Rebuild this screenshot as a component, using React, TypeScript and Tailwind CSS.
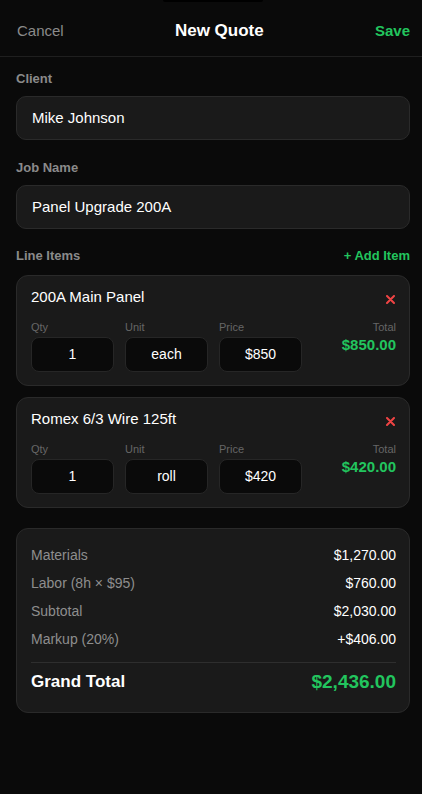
const font = { fontFamily: '"Liberation Sans", Arial, sans-serif' };

type Item = { name: string; qty: string; unit: string; price: string; total: string };

const items: Item[] = [
  { name: "200A Main Panel", qty: "1", unit: "each", price: "$850", total: "$850.00" },
  { name: "Romex 6/3 Wire 125ft", qty: "1", unit: "roll", price: "$420", total: "$420.00" },
];

const summary = [
  { label: "Materials", value: "$1,270.00" },
  { label: "Labor (8h × $95)", value: "$760.00" },
  { label: "Subtotal", value: "$2,030.00" },
  { label: "Markup (20%)", value: "+$406.00" },
];

const Field = ({ label, value }: { label: string; value: string }) => (
  <div className="mb-[20px]">
    <div className="text-[13px] leading-[16px] font-bold text-[#8a8a8a] mb-[9px]">{label}</div>
    <div className="h-[44px] rounded-[10px] bg-[#1a1a1a] border border-[#2a2a2a] flex items-center px-[15px] text-[15px] text-white">
      {value}
    </div>
  </div>
);

const Cell = ({ label, value }: { label: string; value: string }) => (
  <div className="w-[83px]">
    <div className="text-[11px] leading-[14px] text-[#666] mb-[3px]">{label}</div>
    <div className="h-[35px] rounded-[8px] bg-[#0a0a0a] border border-[#262626] flex items-center justify-center text-[14px] text-white">
      {value}
    </div>
  </div>
);

const LineItem = ({ item }: { item: Item }) => (
  <div className="rounded-[12px] bg-[#1a1a1a] border border-[#2a2a2a] pl-[14px] pr-[13px] pt-[12px] pb-[13px] mb-[11px]">
    <div className="flex items-center justify-between h-[18px] mb-[14px]">
      <span className="text-[15px] text-white">{item.name}</span>
      <svg width="9" height="9" viewBox="0 0 9 9" className="mt-[4px] mr-[1px]">
        <path d="M1 1L8 8M8 1L1 8" stroke="#ef4444" strokeWidth="2" strokeLinecap="round" />
      </svg>
    </div>
    <div className="flex gap-[11px]">
      <Cell label="Qty" value={item.qty} />
      <Cell label="Unit" value={item.unit} />
      <Cell label="Price" value={item.price} />
      <div className="flex-1 text-right">
        <div className="text-[11px] leading-[14px] text-[#666] mb-[1px]">Total</div>
        <div className="text-[15px] leading-[20px] font-bold text-[#22c55e]">{item.total}</div>
      </div>
    </div>
  </div>
);

export default function App() {
  return (
    <div className="w-[422px] h-[794px] bg-[#0a0a0a] relative overflow-hidden" style={font}>
      <div className="absolute top-0 left-[163px] w-[100px] h-[2px] bg-black rounded-b" />
      <div className="h-[57px] border-b border-[#1f1f1f] flex items-center justify-between pl-[17px] pr-[12px] pt-[6px]">
        <span className="text-[15px] text-[#8a8a8a]">Cancel</span>
        <span className="text-[17px] font-bold text-white">New Quote</span>
        <span className="text-[15px] font-bold text-[#22c55e]">Save</span>
      </div>
      <div className="pl-[16px] pr-[12px] pt-[14px]">
        <Field label="Client" value="Mike Johnson" />
        <Field label="Job Name" value="Panel Upgrade 200A" />
        <div className="flex items-center justify-between h-[16px] -mt-[1px] mb-[11px]">
          <span className="text-[13px] font-bold text-[#8a8a8a]">Line Items</span>
          <span className="text-[13px] font-bold text-[#22c55e]">+ Add Item</span>
        </div>
        {items.map((it) => (
          <LineItem key={it.name} item={it} />
        ))}
        <div className="mt-[20px] rounded-[12px] bg-[#1a1a1a] border border-[#2a2a2a] pl-[14px] pr-[13px] pt-[12px] pb-[18px]">
          {summary.map((s) => (
            <div key={s.label} className="h-[28px] flex items-center justify-between text-[14px]">
              <span className="text-[#8e8e8e]">{s.label}</span>
              <span className="text-white">{s.value}</span>
            </div>
          ))}
          <div className="mt-[9px] border-t border-[#2e2e2e] pt-[7px]">
            <div className="h-[24px] flex items-center justify-between">
              <span className="text-[17px] font-bold text-white">Grand Total</span>
              <span className="text-[19px] font-bold text-[#22c55e]">$2,436.00</span>
            </div>
          </div>
        </div>
      </div>
    </div>
  );
}
